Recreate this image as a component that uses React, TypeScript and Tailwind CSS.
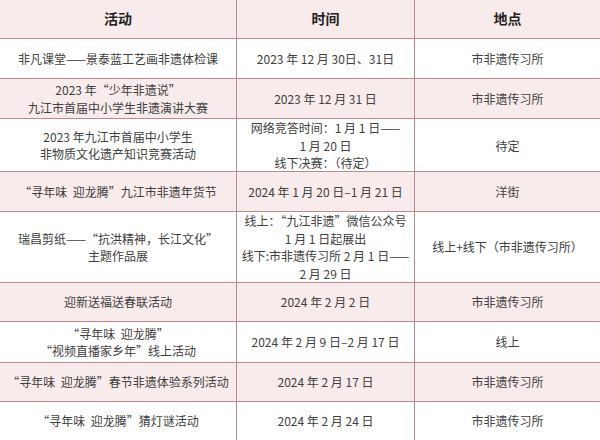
import React from "react";

type Row = {
  h: string;
  bg: string;
  activity: string[];
  time: string[];
  place: string[];
};

const rows: Row[] = [
  {
    h: "h-[40px]",
    bg: "bg-white",
    activity: ["非凡课堂——景泰蓝工艺画非遗体检课"],
    time: ["2023 年 12 月 30日、31日"],
    place: ["市非遗传习所"],
  },
  {
    h: "h-[40px]",
    bg: "bg-[#f8ebeb]",
    activity: ["2023 年“少年非遗说”", "九江市首届中小学生非遗演讲大赛"],
    time: ["2023 年 12 月 31 日"],
    place: ["市非遗传习所"],
  },
  {
    h: "h-[53px]",
    bg: "bg-white",
    activity: ["2023 年九江市首届中小学生", "非物质文化遗产知识竞赛活动"],
    time: ["网络竞答时间：1 月 1 日——", "1 月 20 日", "线下决赛：（待定）"],
    place: ["待定"],
  },
  {
    h: "h-[40px]",
    bg: "bg-[#f8ebeb]",
    activity: ["“寻年味  迎龙腾”九江市非遗年货节"],
    time: ["2024 年 1 月 20 日–1 月 21 日"],
    place: ["洋街"],
  },
  {
    h: "h-[71px]",
    bg: "bg-white",
    activity: ["瑞昌剪纸——“抗洪精神，长江文化”", "主题作品展"],
    time: [
      "线上：“九江非遗”微信公众号",
      "1 月 1 日起展出",
      "线下:市非遗传习所 2 月 1 日——",
      "2 月 29 日",
    ],
    place: ["线上+线下（市非遗传习所）"],
  },
  {
    h: "h-[39px]",
    bg: "bg-[#f8ebeb]",
    activity: ["迎新送福送春联活动"],
    time: ["2024 年 2 月 2 日"],
    place: ["市非遗传习所"],
  },
  {
    h: "h-[41px]",
    bg: "bg-white",
    activity: ["“寻年味  迎龙腾”", "“视频直播家乡年”线上活动"],
    time: ["2024 年 2 月 9 日–2 月 17 日"],
    place: ["线上"],
  },
  {
    h: "h-[39px]",
    bg: "bg-[#f8ebeb]",
    activity: ["“寻年味  迎龙腾”春节非遗体验系列活动"],
    time: ["2024 年 2 月 17 日"],
    place: ["市非遗传习所"],
  },
  {
    h: "h-[39px]",
    bg: "bg-white",
    activity: ["“寻年味  迎龙腾”猜灯谜活动"],
    time: ["2024 年 2 月 24 日"],
    place: ["市非遗传习所"],
  },
];

function Cell({ lines, last }: { lines: string[]; last?: boolean }) {
  return (
    <div
      className={
        "flex flex-col items-center justify-center text-center whitespace-pre " +
        (last ? "" : "border-r border-[#b98a90]")
      }
    >
      {lines.map((l, i) => (
        <div key={i}>{l}</div>
      ))}
    </div>
  );
}

export default function App() {
  return (
    <div
      className="w-[600px] h-[440px] overflow-hidden bg-white text-[12px] leading-[17.5px] text-[#404040]"
      style={{ fontFamily: '"Noto Sans CJK SC", "Noto Sans", sans-serif' }}
    >
      <div className="grid grid-cols-[237px_178px_185px] h-[39px] bg-[#f8ebeb] border-b border-[#b98a90] text-[14px] font-bold text-[#222]">
        <div className="flex items-center justify-center border-r border-[#b98a90]">活动</div>
        <div className="flex items-center justify-center border-r border-[#b98a90]">时间</div>
        <div className="flex items-center justify-center">地点</div>
      </div>
      {rows.map((r, i) => (
        <div
          key={i}
          className={
            "grid grid-cols-[237px_178px_185px] border-b border-[#b98a90] " + r.h + " " + r.bg
          }
        >
          <Cell lines={r.activity} />
          <Cell lines={r.time} />
          <Cell lines={r.place} last />
        </div>
      ))}
    </div>
  );
}
